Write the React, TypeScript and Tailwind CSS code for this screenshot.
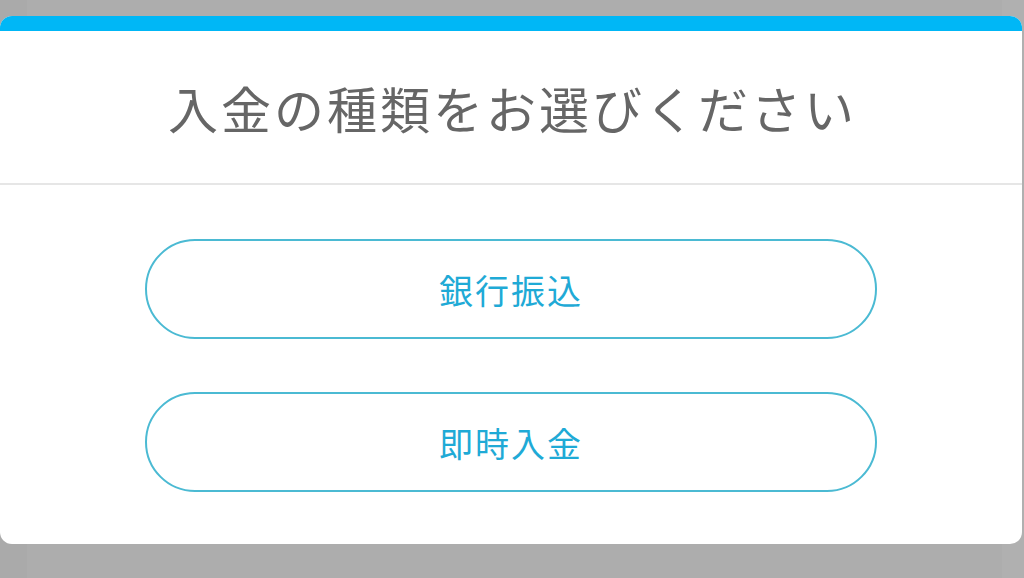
export default function App() {
  return (
    <div className="relative h-[578px] w-[1024px] overflow-hidden bg-[#adadad] font-['Noto_Sans_CJK_JP','Noto_Sans',sans-serif]">
      {/* page underneath the modal */}
      <div className="absolute inset-y-0 left-0 w-[27px] bg-[#aaaaaa]" />
      <div className="absolute inset-y-0 right-0 w-[22px] bg-[#b0b0b0]" />
      <div className="absolute left-[48px] top-[510px] text-[24px] tracking-[12px] text-[#333]">お取引履歴</div>

      {/* modal */}
      <div className="absolute left-0 top-[16px] flex h-[528px] w-[1022px] flex-col overflow-hidden rounded-[12px] bg-white">
        <div className="h-[15px] bg-[#00b7f6]" />
        <div className="flex h-[154px] items-center justify-center border-b-2 border-[#e6e6e6]">
          <h1 className="pl-[3px] text-[50px] font-normal tracking-[3px] text-[#666666]">入金の種類をお選びください</h1>
        </div>
        <div className="flex flex-col items-center gap-[53px] pt-[54px]">
          <button className="flex h-[100px] w-[732px] items-center justify-center rounded-full border-2 border-[#4bbad3] text-[34px] tracking-[2px] text-[#1faad6]">
            銀行振込
          </button>
          <button className="flex h-[100px] w-[732px] items-center justify-center rounded-full border-2 border-[#4bbad3] text-[34px] tracking-[2px] text-[#1faad6]">
            即時入金
          </button>
        </div>
      </div>
    </div>
  )
}
